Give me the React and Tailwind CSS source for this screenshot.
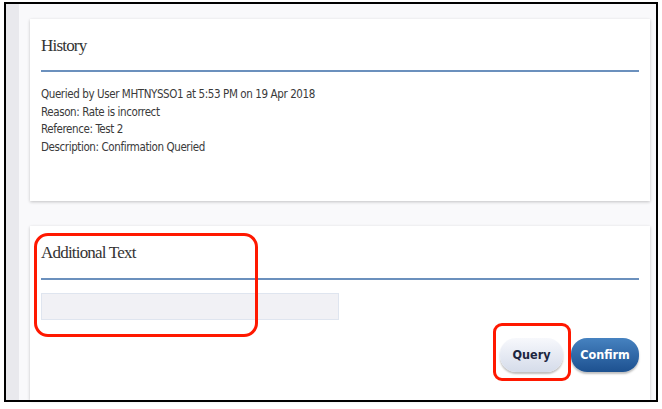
import React from "react";

const serif = "font-['Liberation_Serif',serif]";
const sans = "font-['DejaVu_Sans',sans-serif]";

const historyLines = [
  "Queried by User MHTNYSSO1 at 5:53 PM on 19 Apr 2018",
  "Reason: Rate is incorrect",
  "Reference: Test 2",
  "Description: Confirmation Queried",
];

export default function App() {
  return (
    <div className="w-[662px] h-[409px] bg-white overflow-hidden">
      <div className="mt-[2px] ml-[4px] w-[654px] h-[400px] border-2 border-black flex bg-[#f9f9fb]">
        {/* left gutter */}
        <div className="w-[13px] bg-[#e9e9ed]" />

        <div className="flex-1 pl-[11px] pr-[6px] pt-[15px] flex flex-col gap-[25px]">
          {/* History card */}
          <div className="h-[182px] bg-white shadow-[0_1px_3px_rgba(0,0,0,0.22)] px-[11px] pt-[15px]">
            <h2 className={`${serif} text-[17px] leading-[24px] tracking-[-0.8px] text-[#333] font-normal`}>History</h2>
            <div className="mt-[12px] h-[2px] bg-[#6b90bd]" />
            <div className={`${sans} font-stretch-condensed mt-[14px] text-[11.5px] leading-[17.5px] tracking-[-0.4px] text-[#3a3a3a]`}>
              {historyLines.map((l) => (
                <p key={l}>{l}</p>
              ))}
            </div>
          </div>

          {/* Additional text card */}
          <div className="relative flex-1 bg-white shadow-[0_1px_3px_rgba(0,0,0,0.22)] px-[11px] pt-[15px]">
            <h2 className={`${serif} text-[17px] leading-[24px] tracking-[-0.8px] text-[#333] font-normal`}>Additional Text</h2>
            <div className="mt-[13px] h-[2px] bg-[#6b90bd]" />
            <div className="mt-[13px] w-[298px] h-[27px] bg-[#f1f1f5] border border-[#dfe5ef]" />

            <div className="mt-[18px] flex justify-end gap-[8px]">
              <div className="relative">
                <button className={`${sans} font-stretch-condensed w-[63px] h-[34px] rounded-[16px] bg-gradient-to-b from-[#f7f8fc] to-[#d5dcea] shadow-[0_2px_2px_rgba(0,0,0,0.25)] text-[12.5px] font-bold text-[#1c2540]`}>
                  Query
                </button>
                <div className="absolute -left-[7px] -right-[8px] -top-[15px] -bottom-[9px] border-[3px] border-[#ff1800] rounded-[9px] pointer-events-none" />
              </div>
              <button className={`${sans} font-stretch-condensed w-[68px] h-[34px] rounded-[16px] bg-gradient-to-b from-[#4682c0] to-[#1d5190] shadow-[0_2px_2px_rgba(0,0,0,0.25)] text-[12.5px] font-bold text-white`}>
                Confirm
              </button>
            </div>

            {/* highlight around heading + input */}
            <div className="absolute left-[4px] top-[7px] w-[224px] h-[104px] border-[3px] border-[#ff1800] rounded-[14px] pointer-events-none" />
          </div>
        </div>
      </div>
    </div>
  );
}
